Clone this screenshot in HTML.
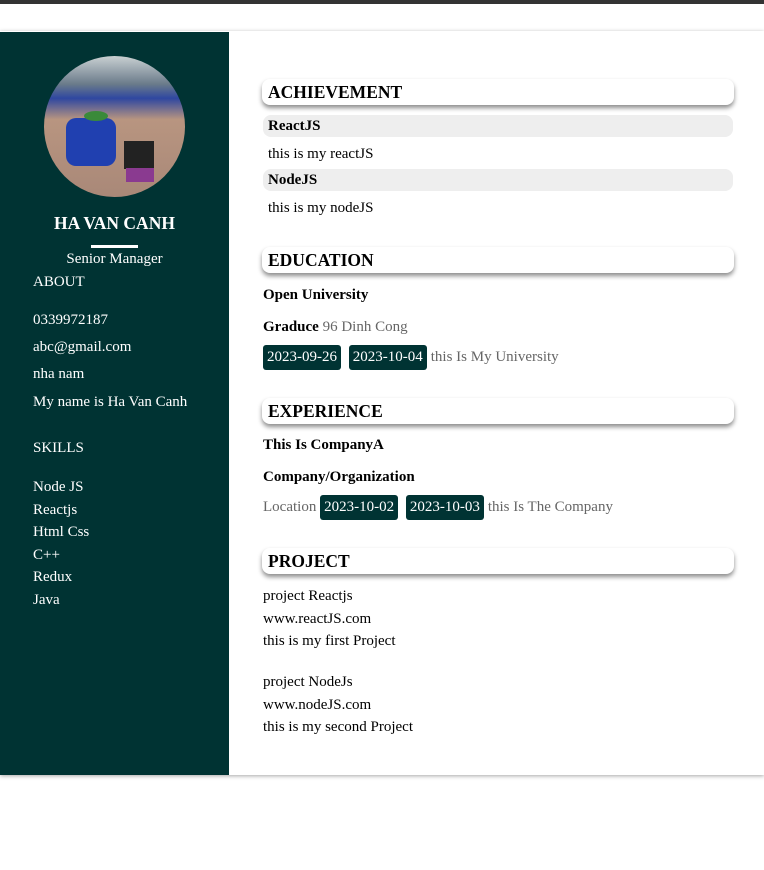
<!DOCTYPE html>
<html><head><style>
*{margin:0;padding:0;box-sizing:border-box}
body{width:764px;height:870px;background:#fff;font-family:"Liberation Serif",serif;font-size:15px;color:#000;position:relative;overflow:hidden}
.a{position:absolute;white-space:nowrap}
#top{position:absolute;left:0;top:0;width:764px;height:4px;background:#333}
#wrap{position:absolute;left:0;top:31px;width:764px;height:744px;box-shadow:0 1px 4px rgba(0,0,0,.35);background:#fff}
#side{position:absolute;left:0;top:32px;width:229px;height:743px;background:#003333;color:#fff}
.h{position:absolute;left:262px;width:472px;height:26px;border-radius:8px;background:#fff;box-shadow:0 3px 5px rgba(0,0,0,.45);font-weight:bold;font-size:17.5px;padding:3px 0 0 6px}
.g{position:absolute;left:263px;width:470px;height:22px;border-radius:8px;background:#eee;font-weight:bold;padding:3px 0 0 5px}
.t{display:inline-block;background:#003333;color:#fff;border-radius:3px;padding:4px 4px;margin-right:4px}
.gr{color:#666}
</style></head><body>
<div id="top"></div>
<div id="wrap"></div>
<div id="side">
<div class="a" style="left:44px;top:24px;width:141px;height:141px;border-radius:50%;overflow:hidden;background:linear-gradient(180deg,#c9d0d2 0%,#6a7b8a 20%,#2f47a0 30%,#b89580 45%,#a98878 100%)">
<div style="position:absolute;left:22px;top:62px;width:50px;height:48px;background:#2040b0;border-radius:10px"></div>
<div style="position:absolute;left:40px;top:55px;width:24px;height:10px;background:#3a8a3a;border-radius:50%"></div>
<div style="position:absolute;left:80px;top:85px;width:30px;height:28px;background:#222"></div>
<div style="position:absolute;left:82px;top:112px;width:28px;height:14px;background:#8a3a90"></div>
</div>
<div class="a" style="left:0;width:229px;text-align:center;top:181px;font-weight:bold;font-size:17.5px">HA VAN CANH</div>
<div class="a" style="left:91px;top:213px;width:47px;height:3px;background:#fff"></div>
<div class="a" style="left:0;width:229px;text-align:center;top:219px">Senior Manager</div>
<div class="a" style="left:33px;top:242px">ABOUT</div>
<div class="a" style="left:33px;top:280px">0339972187</div>
<div class="a" style="left:33px;top:307px">abc@gmail.com</div>
<div class="a" style="left:33px;top:334px">nha nam</div>
<div class="a" style="left:33px;top:362px">My name is Ha Van Canh</div>
<div class="a" style="left:33px;top:408px">SKILLS</div>
<div class="a" style="left:33px;top:444px;line-height:22.5px">Node JS<br>Reactjs<br>Html Css<br>C++<br>Redux<br>Java</div>
</div>

<div class="h" style="top:79px">ACHIEVEMENT</div>
<div class="g" style="top:115px">ReactJS</div>
<div class="a" style="left:268px;top:146px">this is my reactJS</div>
<div class="g" style="top:169px">NodeJS</div>
<div class="a" style="left:268px;top:200px">this is my nodeJS</div>

<div class="h" style="top:247px">EDUCATION</div>
<div class="a" style="left:263px;top:287px;font-weight:bold">Open University</div>
<div class="a" style="left:263px;top:319px"><b>Graduce</b> <span class="gr">96 Dinh Cong</span></div>
<div class="a" style="left:263px;top:345px"><span class="t">2023-09-26</span> <span class="t">2023-10-04</span><span class="gr">this Is My University</span></div>

<div class="h" style="top:398px">EXPERIENCE</div>
<div class="a" style="left:263px;top:437px;font-weight:bold">This Is CompanyA</div>
<div class="a" style="left:263px;top:469px;font-weight:bold">Company/Organization</div>
<div class="a" style="left:263px;top:495px"><span class="gr">Location</span> <span class="t">2023-10-02</span> <span class="t">2023-10-03</span><span class="gr">this Is The Company</span></div>

<div class="h" style="top:548px">PROJECT</div>
<div class="a" style="left:263px;top:585px;line-height:22.5px">project Reactjs<br>www.reactJS.com<br>this is my first Project</div>
<div class="a" style="left:263px;top:671px;line-height:22.5px">project NodeJs<br>www.nodeJS.com<br>this is my second Project</div>
</body></html>
